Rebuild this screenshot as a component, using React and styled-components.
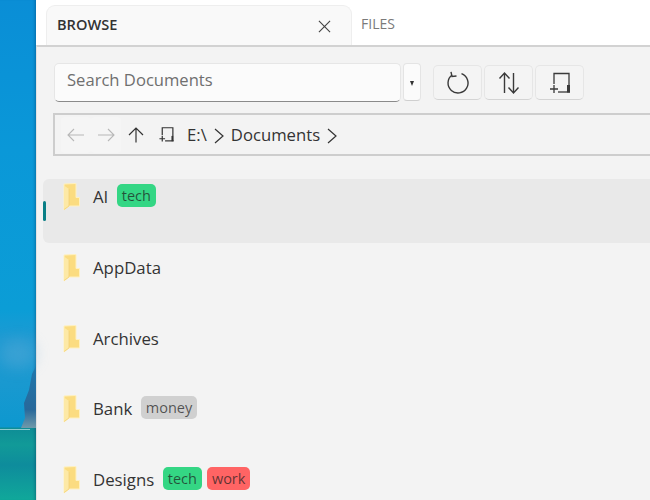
import React from 'react';
import styled, { createGlobalStyle } from 'styled-components';

const GlobalStyle = createGlobalStyle`
    html, body {
        margin: 0;
        padding: 0;
        overflow: hidden;
    }
    * {
        box-sizing: border-box;
    }
    body {
        font-family: "Open Sans", "Noto Sans", sans-serif;
        color: #333;
    }
`

const folders = [
    { name: 'AI', tags: ['tech'], selected: true },
    { name: 'AppData', tags: [] },
    { name: 'Archives', tags: [] },
    { name: 'Bank', tags: ['money'] },
    { name: 'Designs', tags: ['tech', 'work'] },
];

const FolderIcon = () => (
    <svg width="20" height="30" viewBox="0 0 20 30">
        <path d="M3 2 L15 1.5 L15 15.5 L18.5 15.5 L18.5 24 L8 24 L3 28 Z" fill="#fbdc80" stroke="#fff1c0" strokeWidth="1" />
        <path d="M3 3.5 L8 7 L8 24 L3 28 Z" fill="#fde9a6" />
        <path d="M8 7 L8 24 L3 27.5" fill="none" stroke="#f0cf72" strokeWidth="0.7" />
    </svg>
);

const DriveIcon = ({ size, weight }) => (
    <svg width={size} height={size} viewBox="0 0 24 24" fill="none" stroke="currentColor" strokeWidth={weight}>
        <path d="M6 13 V2.5 H21 V14" />
        <path d="M10 21 H22" />
        <path d="M2 18 H10 M6 14 V22" />
        <rect x="19" y="14" width="3" height="7.5" fill="currentColor" stroke="none" />
    </svg>
);

const Arrow = ({ flip, color }) => (
    <svg width="18" height="14" viewBox="0 0 18 14" fill="none" stroke={color} strokeWidth="1.1" style={flip ? { transform: 'scaleX(-1)' } : undefined}>
        <path d="M1 7 H17 M7 1 L1 7 L7 13" />
    </svg>
);

export default function App() {
    return (
        <Page>
            <GlobalStyle />
            <Wallpaper>
                <Cloud />
                <Rock viewBox="0 0 15 62" preserveAspectRatio="none">
                    <defs>
                        <linearGradient id="rockFill" x1="0" y1="0" x2="0" y2="1">
                            <stop offset="0" stopColor="#1f78ad" />
                            <stop offset="0.7" stopColor="#28689a" />
                            <stop offset="1" stopColor="#6f9aaa" />
                        </linearGradient>
                    </defs>
                    <path d="M15 0 L15 62 L0 62 L4 52 L3 37 L8 24 L11 8 Z" fill="url(#rockFill)" />
                </Rock>
                <Horizon />
            </Wallpaper>
            <Window>
                <TabStrip>
                    <ActiveTab>
                        BROWSE
                        <CloseIcon viewBox="0 0 14 14">
                            <path d="M1 1 L13 13 M13 1 L1 13" />
                        </CloseIcon>
                    </ActiveTab>
                    <Tab>FILES</Tab>
                </TabStrip>
                <Content>
                    <Toolbar>
                        <SearchBox placeholder="Search Documents" readOnly />
                        <DropButton><Caret /></DropButton>
                        <ToolGroup>
                            <ToolButton>
                                <svg width="24" height="24" viewBox="0 0 24 24" fill="none" stroke="#3a3a3a" strokeWidth="1.4">
                                    <path d="M15.5 2.6 A10 10 0 1 1 6 4" />
                                    <path d="M5 0.8 L6 5.5 L10.5 5" />
                                </svg>
                            </ToolButton>
                            <ToolButton>
                                <svg width="22" height="24" viewBox="0 0 22 24" fill="none" stroke="#3a3a3a" strokeWidth="1.4">
                                    <path d="M6.5 22 V2 M1.5 7.5 L6.5 2 L11.5 7.5" />
                                    <path d="M15.5 2 V22 M10.5 16.5 L15.5 22 L20.5 16.5" />
                                </svg>
                            </ToolButton>
                            <ToolButton>
                                <DriveIcon size={24} weight={1.3} />
                            </ToolButton>
                        </ToolGroup>
                    </Toolbar>
                    <PathBar>
                        <NavButton><Arrow color="#b8b8b8" /></NavButton>
                        <NavButton><Arrow flip color="#b8b8b8" /></NavButton>
                        <UpIcon width="16" height="16" viewBox="0 0 16 16">
                            <path d="M8 15.5 V1 M1 8 L8 1 L15 8" />
                        </UpIcon>
                        <PathDrive><DriveIcon size={17} weight={1.7} /></PathDrive>
                        <Crumb>E:\</Crumb>
                        <Chevron />
                        <Crumb>Documents</Crumb>
                        <Chevron />
                    </PathBar>
                    <FolderList>
                        {folders.map(folder => (
                            <FolderRow key={folder.name} $selected={folder.selected}>
                                {folder.selected && <Indicator />}
                                <FolderIcon />
                                <FolderName>{folder.name}</FolderName>
                                {folder.tags.map(tag => (
                                    <Tag key={tag} $kind={tag}>{tag}</Tag>
                                ))}
                            </FolderRow>
                        ))}
                    </FolderList>
                </Content>
            </Window>
        </Page>
    )
}

const Chevron = () => (
    <ChevronIcon width="10" height="16" viewBox="0 0 10 16">
        <path d="M1 1 L9 8 L1 15" />
    </ChevronIcon>
);

const Page = styled.div`
    width: 650px;
    height: 500px;
    display: flex;
    overflow: hidden;
`
const Wallpaper = styled.div`
    position: relative;
    width: 36px;
    flex-shrink: 0;
    background: linear-gradient(180deg,
        #0a8ed6 0%, #0a98d8 30%, #0b9dd6 62%, #1f9ad2 68%, #1a99d0 76%, #0d98cf 85.4%,
        #0e8d96 85.6%, #119a98 89%, #0e8c9c 93%, #10a89a 100%);
    box-shadow: inset -3px 0 3px -2px rgba(0, 40, 80, 0.35);
`
const Cloud = styled.div`
    position: absolute;
    left: 0;
    top: 340px;
    width: 36px;
    height: 28px;
    background: rgba(120, 180, 220, 0.3);
    border-radius: 14px;
    filter: blur(7px);
`
const Rock = styled.svg`
    position: absolute;
    right: 0;
    top: 366px;
    width: 15px;
    height: 62px;
`
const Horizon = styled.div`
    position: absolute;
    left: 0;
    top: 429px;
    width: 30px;
    height: 1px;
    background: rgba(225, 245, 245, 0.6);
`
const Window = styled.div`
    flex: 1;
    min-width: 0;
    display: flex;
    flex-direction: column;
    background: #fff;
`
const TabStrip = styled.div`
    height: 45px;
    padding: 5px 0 0 10px;
    display: flex;
    flex-shrink: 0;
    background: #fff;
`
const ActiveTab = styled.div`
    width: 306px;
    height: 40px;
    padding: 0 20px 3px 10px;
    display: flex;
    align-items: center;
    justify-content: space-between;
    background: #f9f9f9;
    border: 1px solid #eeeeee;
    border-bottom: none;
    border-radius: 9px 9px 0 0;
    font-size: 14.6px;
    font-weight: 600;
    color: #333;
`
const CloseIcon = styled.svg`
    width: 13px;
    height: 13px;
    margin-top: 4px;
    fill: none;
    stroke: #444;
    stroke-width: 1.2;
`
const Tab = styled.div`
    height: 40px;
    padding: 0 9px 3px;
    display: flex;
    align-items: center;
    font-size: 14px;
    color: #7a7a7a;
`
const Content = styled.div`
    flex: 1;
    min-height: 0;
    padding: 16px 0 0 6px;
    background: #f3f3f3;
    border-top: 2px solid #d2d2d2;
    border-left: 1px solid #e2e2e2;
    overflow: hidden;
`
const Toolbar = styled.div`
    height: 40px;
    margin-left: 11px;
    display: flex;
    align-items: flex-start;
`
const SearchBox = styled.input`
    width: 347px;
    height: 39px;
    padding: 0 12px 6px;
    background: #fbfbfb;
    border: 1px solid #e6e6e6;
    border-bottom: 1.5px solid #8a8a8a;
    border-radius: 5px;
    outline: none;
    font-family: inherit;
    font-size: 16.6px;
    &::placeholder {
        color: #6f6f6f;
        opacity: 1;
    }
`
const DropButton = styled.div`
    width: 18px;
    height: 38px;
    margin-left: 2px;
    display: flex;
    align-items: center;
    justify-content: center;
    background: #fbfbfb;
    border: 1px solid #e4e4e4;
    border-bottom-color: #cfcfcf;
    border-radius: 4px;
`
const Caret = styled.div`
    margin-top: 3px;
    width: 0;
    height: 0;
    border-left: 2.5px solid transparent;
    border-right: 2.5px solid transparent;
    border-top: 5px solid #333;
`
const ToolGroup = styled.div`
    margin: 2px 0 0 12px;
    display: flex;
    gap: 2px;
`
const ToolButton = styled.div`
    width: 49px;
    height: 35px;
    display: flex;
    align-items: center;
    justify-content: center;
    background: #f4f4f4;
    border: 1px solid #e6e6e6;
    border-bottom-color: #d4d4d4;
    border-radius: 5px;
    color: #3a3a3a;
`
const PathBar = styled.div`
    width: 620px;
    height: 43px;
    margin: 10px 0 0 10px;
    padding-left: 6px;
    display: flex;
    align-items: center;
    background: #f3f3f3;
    border: 2px solid #cdcdcd;
    color: #333;
`
const NavButton = styled.div`
    width: 30px;
    height: 36px;
    display: flex;
    align-items: center;
    justify-content: center;
    background: #f5f5f5;
    border-radius: 4px;
`
const UpIcon = styled.svg`
    margin-left: 7px;
    fill: none;
    stroke: #333;
    stroke-width: 1.2;
`
const PathDrive = styled.div`
    margin: 0 12px 0 14px;
    display: flex;
`
const Crumb = styled.span`
    font-size: 16.7px;
    color: #333;
`
const ChevronIcon = styled.svg`
    margin: 2px 7px 0 7px;
    fill: none;
    stroke: #333;
    stroke-width: 1.2;
`
const FolderList = styled.div`
    margin-top: 23px;
    display: flex;
    flex-direction: column;
    gap: 6.75px;
`
const FolderRow = styled.div`
    position: relative;
    height: 64px;
    padding: 3px 0 0 18px;
    display: flex;
    align-items: flex-start;
    background: ${props => props.$selected ? '#e9e9e9' : 'transparent'};
    border-radius: 6px 0 0 6px;
`
const Indicator = styled.div`
    position: absolute;
    left: 0;
    top: 22px;
    width: 3px;
    height: 20px;
    background: #0a7f86;
    border-radius: 2px;
`
const FolderName = styled.span`
    margin: 3px 8.5px 0 12px;
    font-size: 16.8px;
    line-height: 24px;
    color: #333;
`
const tagColors = {
    tech: '#34d684',
    money: '#d0d0d0',
    work: '#ff6464',
};
const Tag = styled.span`
    margin: 2px 5px 0 0;
    height: 23px;
    padding: 0 5px;
    display: flex;
    align-items: center;
    background: ${props => tagColors[props.$kind]};
    border-radius: 5px;
    font-size: 14.5px;
    color: rgba(30, 30, 30, 0.72);
`
